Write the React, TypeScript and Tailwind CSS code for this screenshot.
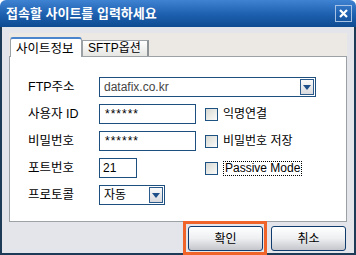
import { ReactNode } from 'react';

function Arrow() {
  return (
    <div className="w-[14px] h-[16px] border border-[#2a5b8c] bg-gradient-to-b from-[#fafafa] to-[#d9dade] flex items-center justify-center">
      <svg width="8" height="5" viewBox="0 0 8 5">
        <polygon points="0,0 8,0 4,5" fill="#1f4f89" />
      </svg>
    </div>
  );
}

function Check({ label, focus }: { label: string; focus?: boolean }) {
  return (
    <div className="flex items-center">
      <div className="w-[13px] h-[13px] border border-[#1d5283] bg-gradient-to-br from-[#d8d8d3] to-[#fbfbfa]" />
      <span className={`ml-[5px] leading-[13px] ${focus ? 'border border-dotted border-black px-[1px]' : ''}`}>{label}</span>
    </div>
  );
}

function Row({ label, children }: { label: string; children: ReactNode }) {
  return (
    <div className="h-[20px] flex items-center">
      <div className="w-[71px] text-[12.5px]">{label}</div>
      {children}
    </div>
  );
}

export default function App() {
  return (
    <div className="w-[356px] h-[255px] flex flex-col text-[12px] text-black font-['Liberation_Sans','Noto_Sans_CJK_KR',sans-serif]">
      <div className="h-[27px] rounded-t-[6px] bg-gradient-to-b from-[#3f83d3] via-[#1f62b2] to-[#0d4a91] flex items-center justify-between pl-[6px] pr-[4px]">
        <span className="text-white font-bold text-[13px]">접속할 사이트를 입력하세요</span>
        <div className="w-[17px] h-[17px] border border-[#a8c2e4] flex items-center justify-center">
          <svg width="9" height="9" viewBox="0 0 9 9">
            <path d="M1 1 L8 8 M8 1 L1 8" stroke="#fff" strokeWidth="2.2" />
          </svg>
        </div>
      </div>

      <div className="flex-1 bg-[#e4e5ea] border-x-2 border-b-2 border-[#1d3b57] px-[7px] pt-[6px]">
        <div className="h-[23px] bg-[#ece9e5] flex items-end">
          <div className="relative z-10 -mb-[1px] ml-[1px] h-[20px] w-[72px] bg-white border border-b-0 border-[#9ca1a6] border-t-2 border-t-[#4a84cc] rounded-t-[3px] pl-[5px] pt-[1px] text-[12.5px]">
            사이트정보
          </div>
          <div className="h-[16px] w-[67px] border border-b-0 border-[#9ca1a6] border-r-2 border-r-[#8e9396] bg-gradient-to-b from-white to-[#e6e6e3] pl-[5px] leading-[15px]">
            SFTP옵션
          </div>
        </div>

        <div className="h-[166px] bg-white border border-[#9ca1a6] pl-[18px] pt-[20px] flex flex-col gap-[7px]">
          <Row label="FTP주소">
            <div className="w-[217px] h-[20px] border border-[#1e4f7f] flex items-center justify-between pl-[4px] pr-[1px] text-[#454545]">
              <span>datafix.co.kr</span>
              <Arrow />
            </div>
          </Row>
          <Row label="사용자 ID">
            <div className="w-[97px] h-[20px] border border-[#1e4f7f] pl-[5px] flex items-center tracking-[1px]">******</div>
            <div className="ml-[9px]">
              <Check label="익명연결" />
            </div>
          </Row>
          <Row label="비밀번호">
            <div className="w-[97px] h-[20px] border border-[#1e4f7f] pl-[5px] flex items-center tracking-[1px]">******</div>
            <div className="ml-[9px]">
              <Check label="비밀번호 저장" />
            </div>
          </Row>
          <Row label="포트번호">
            <div className="w-[38px] h-[20px] border border-[#1e4f7f] pl-[3px] flex items-center">21</div>
            <div className="ml-[68px]">
              <Check label="Passive Mode" focus />
            </div>
          </Row>
          <Row label="프로토콜">
            <div className="w-[66px] h-[20px] border border-[#1e4f7f] flex items-center justify-between pl-[4px] pr-[1px]">
              <span>자동</span>
              <Arrow />
            </div>
          </Row>
        </div>

        <div className="flex justify-end gap-[8px] mt-[4px] pr-[1px]">
          <div className="relative">
            <button className="w-[75px] h-[25px] border border-[#0f3c6d] rounded-[3px] bg-gradient-to-b from-white via-[#eeeff1] to-[#c4c6cc]">
              확인
            </button>
            <div className="absolute -left-[5px] -right-[4px] -top-[5px] -bottom-[4px] border-[3px] border-[#f0642a]" />
          </div>
          <button className="w-[75px] h-[25px] border border-[#0f3c6d] rounded-[3px] bg-gradient-to-b from-white via-[#eeeff1] to-[#c4c6cc]">
            취소
          </button>
        </div>
      </div>
    </div>
  );
}
